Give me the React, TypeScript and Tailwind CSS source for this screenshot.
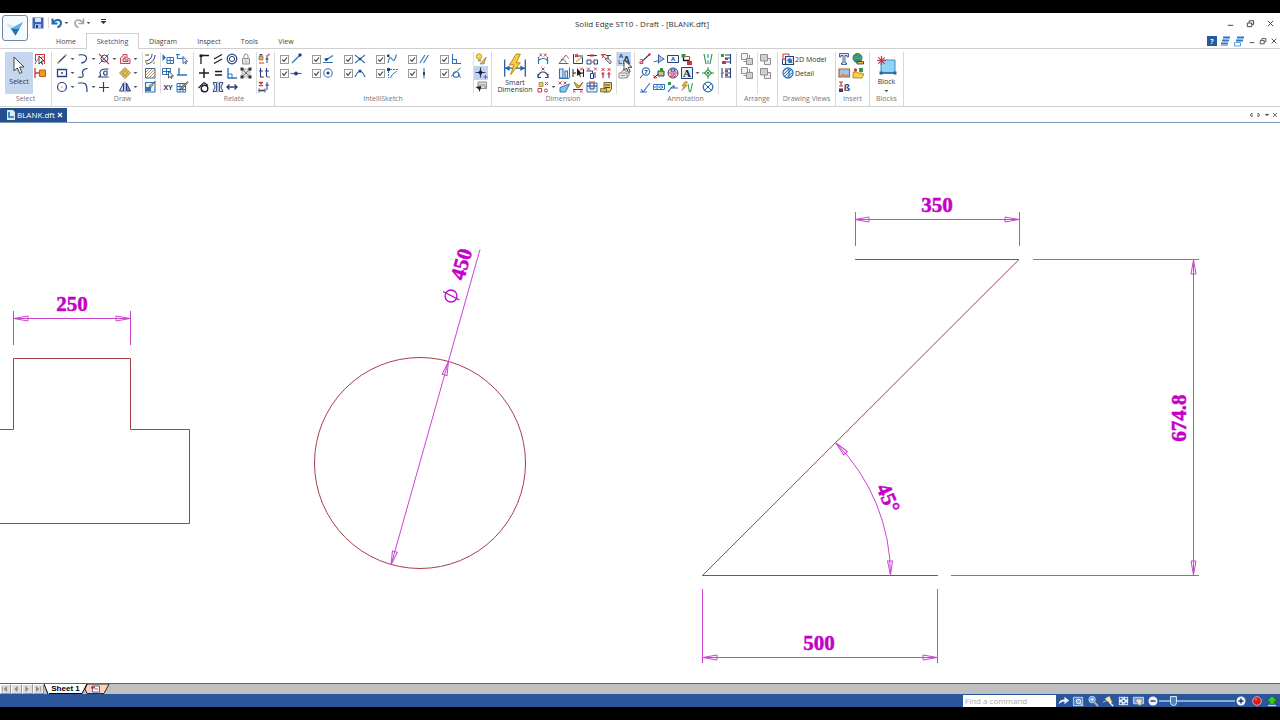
import React from "react";

const N = "#27407f";
const B = "#2f74b8";
const R = "#d2343c";
const Y = "#ecb72c";
const G = "#2f9a3f";
const K = "#1c1c24";
const S = "#8e8e8e";

const P = ({ d, c = "none", f = "none", w = 1, dash }: { d: string; c?: string; f?: string; w?: number; dash?: string }) => (
  <path d={d} stroke={c} fill={f} strokeWidth={w} strokeDasharray={dash} />
);
const C = ({ x = 7, y = 7, r = 4, c = "none", f = "none", w = 1 }: { x?: number; y?: number; r?: number; c?: string; f?: string; w?: number }) => (
  <circle cx={x} cy={y} r={r} stroke={c} fill={f} strokeWidth={w} />
);
const T = ({ x = 7, y = 10, s = 8, f = N, serif = false, children }: { x?: number; y?: number; s?: number; f?: string; serif?: boolean; children: string }) => (
  <text x={x} y={y} fontSize={s} fill={f} textAnchor="middle" className={serif ? "font-['Liberation_Serif',serif] font-bold" : "font-['Open_Sans',sans-serif] font-bold"}>
    {children}
  </text>
);

const art: Record<string, React.ReactNode> = {
  selCurve: <><P d="M2.500 2v7M2 2.500h10M11.500 3v9M2 12c2-5 5-7 9-7" c={R} /><P d="M6 4v8l2-2 1.500 2.500L8.500 9H11z" c={K} f="#fff" w={0.8} /></>,
  selDim: <><P d="M2 2v10M2 7h5" c={R} w={1.3} /><P d="M6.500 4h6v6.500h-6z" c="#b8640c" f="#f39a1d" /></>,
  line: <><P d="M3 11 11 3" c={N} w={1.2} /><C x={3} y={11} r={1.1} f={Y} /><C x={11} y={3} r={1.1} f={Y} /></>,
  arc: <P d="M2.500 3C9 2 11 4 10.500 7S6.500 11 5 11" c={N} w={1.2} />,
  trim: <><C x={7.500} y={6.500} r={3.500} c={N} /><P d="M2 12 12 2" c={N} w={0.8} /><P d="M2 2l10 10" c={R} w={1.1} /></>,
  offset: <P d="M2.500 11.500V6L5 4V2.500h4V6l3 1v4.500zM5 9.500V7l2-1V4.500V8h3v1.500z" c="#b84a58" f="#fbe3e6" />,
  rect: <><P d="M2.500 3.500h9v7h-9z" c={N} w={1.3} /><C r={1} f={N} /></>,
  scurve: <P d="M2 11c4 1 6 0 5-2.500S6 3 11.500 2.500" c={N} w={1.2} />,
  dshape: <P d="M11.500 3H8C3.500 3 2 6 3.500 9.500L2 11h9.500M10 5H8.500c-2.500 0-2.500 4 0 4H10z" c={N} w={1.1} />,
  move: <P d="M7 1.500 9.500 4H8v2h2V4.500L12.500 7 10 9.500V8H8v2h1.500L7 12.500 4.500 10H6V8H4v1.500L1.500 7 4 4.500V6h2V4H4.500z" c="#776019" f="#f5c83a" w={0.6} />,
  circle: <><C r={4.500} c={N} w={1.2} /><C r={0.9} f={Y} /></>,
  fillet: <P d="M2 3h4.500C10 3 11 5 11 12" c={N} w={1.2} />,
  cross: <P d="M6.500 2v10M2 7.500h10" c={N} w={1.2} />,
  mirror: <><P d="M5.500 3v8h-4z" c={N} f="#d9e2f4" /><P d="M8.500 3v8h4z" c={N} f="#7d8ebf" /><P d="M7 1.500v11" c={N} w={0.7} /></>,
  curveB: <><P d="M2 9c4 0 7-3 7-7M3 12c5 0 9-4 9-9M2 3h4" c={N} /><P d="M2 2h2v2H2zM10 10h2v2h-2zM2 9h2v2H2z" f={Y} /></>,
  hatch: <><P d="M2.500 2.500h9.500v9.500H2.500z" c="#4a628c" /><P d="M3 6l3-3M3 9l6-6M3 12l9-9M6 12l6-6M9 12l3-3" c="#c2743a" w={0.8} /></>,
  fill: <><P d="M2.500 2.500h9.500v9.500H2.500z" c={B} w={1.1} f="#e8f3fb" /><P d="M3 7h5v4H3z" f={B} /><P d="M12.500 1 6 6l2 1.500z" f={Y} c={N} w={0.6} /></>,
  arrowGrid: <><P d="M1.500 2v7L5 5.500z" f={B} /><P d="M6 5.500h6.500v6H6zM6 8.500h6.500M9.200 5.500v6" c={B} /></>,
  gridCur: <><P d="M1.500 2.500h8v6h-8zM1.500 5.500h8M5.500 2.500v6" c={B} /><P d="M7.500 5v7l1.800-1.500 1 2L11.200 12l-1-2h2.300z" c={K} f="#fff" w={0.7} /></>,
  xy: <T s={7} y={9.500}>XY</T>,
  relArrow: <><P d="M2.500 2v4.500H8" c={B} w={1.2} /><P d="M1 2.500h4" c={B} /><P d="M8 4.500v7l1.600-1.500 1 2 .9-.4-1-2.100h2z" c={N} f="#fff" w={0.8} /></>,
  ell: <P d="M4 2v7h8M2 9h2" c={B} w={1.4} />,
  gridPen: <><P d="M2 3.500h8.500V12H2zM2 6.500h8.500M2 9.500h8.500M5 3.500V12M8 3.500V12" c={B} /><P d="M12.500 1.500 6 8l-.5 1.500L7 9l6-6.500z" f={Y} c={K} w={0.5} /></>,
  corner: <><P d="M4 12V3.500h8" c={K} w={1.3} /><P d="M2.500 2.500h3v2.500h-3z" f={K} /></>,
  parallel: <P d="M3 7l8-4.500M3 11.500 11 7" c={K} w={1.3} />,
  concentric: <><C r={4.800} c={N} w={1.2} /><C r={2.600} c={N} /></>,
  lock: <><P d="M3.500 6.500h7v5.500h-7z" c={S} f="#e6e6e6" /><P d="M5 6.500V4a2 2 0 014 0v2.500M7 8.500v2" c={S} /></>,
  plus: <P d="M7 2.500v9.500M2 7h10" c={K} w={1.5} />,
  equal: <P d="M4 5.500h7M4 9h7" c={K} w={1.5} />,
  perp: <><P d="M3 2v10h9" c={B} w={1.4} /><P d="M3 8h4v4" c={B} /></>,
  rigid: <><P d="M3 3h8v8H3z" c={S} f="#ddd" w={0.6} /><P d="M1.500 1.500h3v3h-3zM9.500 1.500h3v3h-3zM1.500 9.500h3v3h-3zM9.500 9.500h3v3h-3z" f="#333" /><P d="M4 4l6 6M10 4l-6 6" c="#555" w={0.8} /></>,
  tangent: <><C x={7.500} y={8.500} r={3.300} c={K} w={1.4} /><P d="M1.500 8 7 2.500l4 3" c={K} w={1.2} /><C x={7} y={3} r={1} f={B} /></>,
  symm: <><P d="M2 2.500h3.500v9H2l2-4.500zM12 2.500H8.500v9H12L10 7z" c={N} f="#dfe5f1" w={0.9} /><P d="M7 1.500v11" c={N} w={0.6} /></>,
  coll: <P d="M2 7h10M4.500 4.500 2 7l2.500 2.500M9.500 4.500 12 7 9.500 9.500" c={N} w={1.4} />,
  relA: <><P d="M2 4.500h4V8H2z" f={Y} c="#865" w={0.7} /><P d="M3 4V2.500h2V4M10 3v8M8.500 7h3" c={N} /><P d="M2 11h5M11 2l1.500 1.500" c={R} w={1.2} /></>,
  relB: <><P d="M3.500 2v9h2M2 5h4M9.500 2v9M8 5h4" c={N} w={1.1} /><P d="M5 11h2M10 11h3" c={R} /></>,
  relC: <><P d="M2 2l4 4M6 2 2 6M4 1.500v5" c={R} w={1.1} /><P d="M2 8.500v4M8 8.500v4M2 10.500h6M10 2v8M8.500 5H12" c={N} /><P d="M3.500 9l3 3M6.500 9l-3 3" c={R} w={0.8} /></>,
  isEnd: <><P d="M3 11 11 3" c={B} w={1.2} /><C x={11} y={3} r={1.7} f={N} /></>,
  isMid: <><P d="M1.500 7.500h11" c={B} w={1.2} /><C x={7} y={7.500} r={1.9} f={N} /></>,
  isPt: <><P d="M2 10.500h10M4 8.500l8-5" c={B} w={1.2} /><P d="M3 6.500 8 6 5.500 9.500z" f={N} /></>,
  isCen: <><C r={4.200} c={B} w={1.1} /><C r={1.600} f={N} /></>,
  isX: <><P d="M2 3l10 8M2 11l10-8" c={B} w={1.1} /><C r={1.3} f={N} /></>,
  isArc: <><P d="M2 11C3.500 8 4 5.500 7 5.500S10.500 8 12 11" c={B} w={1.2} /><C x={7} y={5} r={1.600} f={N} /></>,
  isCurve: <><P d="M3 11c1-5 2-7 4-4s3 1 4.500-4.500" c={B} w={1.1} /><P d="M2 2.500h2.500V5H2z" f={N} /></>,
  isEdge: <><P d="M3.500 5v7M5 3.500h8" c={B} dash="2 1" /><P d="M5.500 12c1-3 3-5 6-6.500" c={B} /><P d="M2 2h3v3H2z" f={N} /></>,
  isPar: <P d="M3 11l5-8M6.500 11l5-8" c={B} w={1.1} />,
  isVert: <><P d="M7 2v10.500" c={B} w={1.1} /><P d="M6 6h2v3H6z" f={N} /></>,
  isPerp: <P d="M3.500 2v9.500H12M3.500 7.500h4v4" c={B} w={1.1} />,
  isTan: <><C x={7} y={8.500} r={2.8} c={B} w={1.1} /><P d="M2 10.500 11.500 2M9.500 7l2 5" c={B} /></>,
  bulb: <><C x={5} y={4.500} r={2.8} f="#f6dc4a" c="#a68518" w={0.7} /><P d="M4 7.500h3v2H4z" f="#999" /><P d="M6 12 12 5l-2 7z" f={Y} c="#865" w={0.6} /></>,
  plusArrow: <><P d="M6.500 1.500v10M1.500 6.500h10" c={N} w={1.2} /><P d="M6.500 4 9 6.500 6.500 9 4 6.500z" f={K} /><P d="M11.500 9v4M9.500 11h4" c="#a13ab5" /></>,
  screenCur: <><P d="M4 2h8.500v6.500H4z" c={S} f="#ddd" /><P d="M5 5h6v3" c={S} /><P d="M1.500 7 7.500 6 5.500 12 4.500 9z" f={K} /></>,
  dBetween: <><P d="M2.500 5v7M11.500 5v7M3 8c2-2 6-2 8 0" c={B} w={1.2} /><P d="M3.500 1.500l2.500 3M6 1.500l-2.500 3M8 1.500l2.500 3M10.500 1.500 8 4.500" c={R} w={0.9} /></>,
  dAngle: <><P d="M2 11c1-5 4-5 5-5s4 0 5 5M2 8v3.500h3M12 8v3.500H9" c={N} w={1.1} /><P d="M5.500 1.500l3 3M8.500 1.500l-3 3" c={R} /></>,
  dCoord: <><P d="M2 8.500h3.500V12H2z" c={R} /><P d="M3 2.500h4v4H3z" f="#dccf79" c="#8a7b31" w={0.7} /><C x={10} y={10.500} r={1.5} c={R} /><P d="M9 2l3 3M12 2 9 5" c={R} /></>,
  dAng2: <><P d="M2 11.500 9 3M2 11.500h9.500" c={R} /><P d="M4 7.500c3 0 5 1 5 3" c={B} /><P d="M9 3l3 4" c={S} /></>,
  dSym: <><P d="M2.500 2v9.500h9V5M5 4h7" c={N} /><P d="M4 2.500 7 5M7 2 4 5" c={R} w={1.1} /><P d="M11 5 5 10" c={Y} w={1.5} /></>,
  dChain: <><P d="M2 3.500h10M2 8h4v4H2zM9 8h3.500v4H9z" c={N} /><P d="M5.500 2l3 3M8.500 2l-3 3M7 10h2" c={R} /></>,
  dErase: <><P d="M2 2.500h5M2 2.500l5 4M3 6l3-4" c={R} /><P d="M7 3.500h5M9 3v5" c={N} /><P d="M6 7l5 5 1.500-2L9 6z" f="#d9cfd9" c={K} w={0.6} /></>,
  dStep: <P d="M2.500 3v9h3.500V3zM8 12V5h2.500v7zM2 12.500h10M12.500 1.500V12" c={B} w={1.1} f="#dcebf7" />,
  dCursor: <><P d="M2 3v8M2 7h3M12.500 3v8M10 7h2" c={K} /><P d="M6 2v8l2-1.500 1 2.500 1-.5-1-2.500h2z" f={K} /><P d="M9 1.500l3 3M12 1.500l-3 3" c={R} /></>,
  dGroup: <><P d="M1.500 5h6v3M5.500 7.500h3v5h-3zM10 6v6" c={N} /><P d="M2 1.500l3 3M5 1.500l-3 3M9 1.500l3 3M12 1.500l-3 3" c={R} w={0.9} /></>,
  dDouble: <><P d="M2.500 2l3 3M5.500 2l-3 3M8.500 2l3 3M11.500 2l-3 3" c={R} /><P d="M4 6v6M10 6v6M2.500 8h3M8.500 8h3" c="#b52a45" w={1.2} /></>,
  dFill: <><P d="M1.500 1.500l3 3M4.500 1.500l-3 3M6.500 1.500l3 3M9.500 1.500l-3 3" c={R} w={0.9} /><P d="M3 12V7.500L12.500 4l-4 8z" f="#8ac3e8" c={B} /></>,
  dBrush: <><P d="M2 9.500h10" c={N} /><P d="M3 2l3 6 3-1 3-5-4 4z" f={Y} c="#7a5517" w={0.7} /><P d="M2 10.500l2.500 2M4.500 10.500l-2.500 2M9 10.500l2.500 2M11.500 10.500l-2.500 2" c={R} w={0.8} /></>,
  dFrame: <><P d="M2 3h10v9H2z" c={B} f="#eaf4fb" /><P d="M2 6h10M5 3v6h4V3" c={N} /><P d="M4 2h6" c={R} /></>,
  dSheet: <><P d="M5 2.500h7.500V9l-2 3H5z" f="#e9d67a" c="#776324" /><P d="M6 5h5M6 7.500h5" c={N} /><P d="M1.500 8.500h6v3.500h-6z" f={Y} c={K} w={0.5} /></>,
  styleA: <><T x={4} y={6} s={6}>A</T><T x={9.500} y={12} s={10}>A</T><P d="M2 8v3.500h3" c={B} /></>,
  styleGrey: <><P d="M2 7h8v5H2zM4 7l3-4h5v6l-2 3" c={S} f="#eee" /><P d="M4 9.500h4M8 5h3" c={S} /></>,
  leader: <><P d="M5 8.500 12 2" c={N} w={1.1} /><C x={11.500} y={2.500} r={1.2} f={R} /><T x={3.500} y={12} s={8} f={R}>a</T></>,
  edgeCond: <><P d="M1.500 10 12.500 7M6.500 2.500v9" c={B} /><P d="M6.500 3v7.500l5.500-3.500z" f="#a6c7e5" c={N} w={0.7} /></>,
  charBox: <><P d="M1.500 3.500h11v7h-11z" c={N} /><T s={6} y={9.200}>A</T></>,
  connector: <><P d="M3.500 3.500v5h5v3" c={K} w={1.3} /><P d="M1.500 2h4v3.500h-4z" f={G} /><P d="M7 9h5v4H7z" f={R} /><P d="M5.500 4.500h4v5" c={R} /></>,
  balloon: <><C x={8} y={5.500} r={3.700} c={B} w={1.2} /><P d="M5 8.500 2 12" c={N} /><T x={8} y={7.800} s={6}>7</T></>,
  callout: <><P d="M6 5h6v5H6z" c={N} f="#d9bd76" /><P d="M2 12l4-4" c={K} /><P d="M2 12V9M2 12h3" c={R} /><P d="M8 2h3v4H8z" f={G} /></>,
  datum: <><C r={5} c={N} f="#eef" /><P d="M2 7h10" c={R} /><T s={5} y={6}>xx</T><T s={5} y={10.500} f={R}>ab</T></>,
  textA: <><P d="M1.500 1.500h11v11h-11z" c={N} f="#e5edf7" /><T y={11} s={11} f={K} serif>A</T></>,
  surface: <P d="M2 12h7M3 9l2 3 7-9" c={B} w={1.1} />,
  frame: <P d="M1.500 4.500h11v5h-11zM5 4.500v5M9 4.500v5M3 6v2M7 6v2M10.500 6v2" c={B} />,
  weld: <><P d="M2 12 5 8h7" c={B} w={1.2} /><P d="M2 2h3v3H2z" f={G} /><P d="M5 8l3-2.500v2.500" c={N} /></>,
  auto: <><P d="M8 4l1.500 8M12.500 3l-2 9" c={G} /><P d="M5 1.500 2 6h2L2 10.500 7 5.500H5L7.500 2z" f={Y} c="#9a6d10" w={0.6} /></>,
  centerline: <><P d="M3 2l2 10M11 2 9 12" c={G} w={1.2} /><P d="M7 2v4M7 8v4" c={B} /></>,
  centermark: <><P d="M7 1v12M1 7h12" c={G} /><P d="M7 3.500 10.500 7 7 10.500 3.500 7z" c={G} f="#d7efe3" w={1.1} /><C r={1} f={N} /></>,
  bolt: <><C r={4.800} c={B} w={1.3} /><P d="M3.500 3.500l7 7M10.500 3.500l-7 7" c={B} /><C r={1} f={N} /></>,
  table1: <><P d="M6 3h6M6 6h6M6 10h6M11.500 2v10" c={N} w={1.1} /><P d="M2 2h3v3H2z" f={G} /><P d="M6 6h3v2H6zM3 9h4v3H3z" f="#ad3d67" /></>,
  table2: <><P d="M3 2v10M6 3h6M6 7h6M6 11h6M11.500 2v10" c={N} w={1.1} /><P d="M6 4h3v2H6zM6 8h3v2H6z" f="#ad3d67" /><P d="M2 7h3" c={G} /></>,
  arr1: <><P d="M1.500 1.500h6v6h-6z" c={S} f="#f4f4f4" /><P d="M6.500 6.500h6v6h-6z" c={S} f="#cfcfcf" /><P d="M9.500 3v3M3.500 9.500h3" c={S} /></>,
  arr2: <><P d="M6.500 6.500h6v6h-6z" c={S} f="#ececec" /><P d="M2.500 2.500h7v6.500h-7z" c={S} f="#cfcfcf" /></>,
  model: <><P d="M2 2h6v5H2z" c={R} f="#fff" /><P d="M4.500 4.500h8v8h-8z" c={N} f="#e4eefa" w={1.1} /><P d="M6 8l3-2 2 2v3H8z" f={B} /><P d="M1.500 7v5.500h3" c={N} /></>,
  detail: <><C r={5} c={B} w={1.3} f="#e0effa" /><P d="M4 10l6-6M3 8l5-5M6.500 11 11 6.500" c={B} /><P d="M8 3v8" c={N} w={0.8} /></>,
  bigT: <P d="M2.500 1.500h9v3.500H10V3.500H8V11h1.500v1.500h-5V11H6V3.500H4V5H2.500z" c={N} f="#d7e6f6" w={0.8} />,
  globe: <><C x={6.500} y={6} r={4.500} f="#48a552" c="#2f6f96" /><P d="M3 4c3-2 4 1 7 0M3 8h6" c="#337ac0" w={1.3} /><P d="M6 9.500h6.500v2.500H6z" f={Y} c={K} w={0.7} /></>,
  image: <><P d="M2 3h10.500v8H2z" c="#b45a34" f="#9cc8e8" w={1.2} /><P d="M3 10l3-3 2 2 2-1 2 2z" f="#e08a3a" /></>,
  folder: <><P d="M2 12V6h4l1 1h4v1h2l-2 4z" f="#f5d24c" c="#a17d14" w={0.8} /><P d="M8 2h4v4H8z" f={G} /><C x={4.500} y={4} r={1.700} f={R} /></>,
  beta: <><P d="M2 2h4M4 2v4M2 6h4" c={R} w={1.2} /><P d="M2 8.500h4v3.500H2z" f={N} /><T x={10} y={11} s={9}>ß</T></>,
};

const Icon = ({ name }: { name: string }) => (
  <svg viewBox="0 0 14 14" className="size-3.5 shrink-0" fill="none" aria-hidden="true">{art[name]}</svg>
);
const Caret = () => (
  <svg viewBox="0 0 7 14" className="h-3.5 w-[7px] shrink-0" aria-hidden="true"><path d="M1.500 6h4L3.500 8z" fill="#555" /></svg>
);
const Tool = ({ name, on = false }: { name: string; on?: boolean }) => {
  const caret = name.endsWith("+");
  const key = caret ? name.slice(0, -1) : name;
  return (
    <button type="button" aria-label={key} className={on ? "flex h-3.5 items-center bg-[#c3d3ee]" : "flex h-3.5 items-center hover:bg-[#dfe8f6]"}>
      <Icon name={key} />
      {caret && <Caret />}
    </button>
  );
};
const Column = ({ names, wide = false, sep = false, active = "" }: { names: string[]; wide?: boolean; sep?: boolean; active?: string }) => (
  <div className={`flex shrink-0 flex-col items-start ${wide ? "w-[21px]" : ""} ${sep ? "ml-[3px] border-l border-[#dedede]" : ""}`}>
    {names.map((n, i) => <Tool key={i} name={n} on={n === active} />)}
  </div>
);
const Group = ({ label, width, children }: { label: string; width: string; children: React.ReactNode }) => (
  <section aria-label={label} className={`flex shrink-0 flex-col border-r border-[#d8d8d8] ${width}`}>
    <div className="flex h-[42px]">{children}</div>
    <h2 className="text-center leading-[9px] whitespace-nowrap text-[#777]">{label}</h2>
  </section>
);

const checks: [string, string, string, string][] = [
  ["isEnd", "Endpoint", "isMid", "Midpoint"],
  ["isPt", "Point on", "isCen", "Center"],
  ["isX", "Intersection", "isArc", "Silhouette"],
  ["isCurve", "Edit point", "isEdge", "Extension"],
  ["isPar", "Parallel", "isVert", "Vertical"],
  ["isPerp", "Perpendicular", "isTan", "Tangent"],
];
const Check = ({ icon, label }: { icon: string; label: string }) => (
  <label className="flex h-3.5 w-8 items-center">
    <span className="grid">
      <input type="checkbox" defaultChecked aria-label={label} className="peer col-start-1 row-start-1 size-[9px] appearance-none border border-[#9a9a9a] bg-white" />
      <svg viewBox="0 0 9 9" className="invisible col-start-1 row-start-1 size-[9px] peer-checked:visible" fill="none"><path d="M2.300 4.500 4 6.300l3-3.800" stroke="#444" strokeWidth="1.200" /></svg>
    </span>
    <Icon name={icon} />
  </label>
);

const WinIcon = ({ d, label, small = false }: { d: string; label: string; small?: boolean }) => (
  <button type="button" aria-label={label} className={small ? "w-[11px]" : "w-5"}>
    <svg viewBox="0 0 10 10" className={small ? "mx-auto size-2" : "mx-auto size-[9px]"} fill="none"><path d={d} stroke="#444" strokeWidth={1.1} /></svg>
  </button>
);
const MIN = "M2 7h6";
const RES = "M1.500 4.500h5v4h-5zM3.500 4V2h5v4h-2";
const CLOSE = "M2 2l6 6M8 2 2 8";

const Header = () => (
  <header className="flex border-b border-[#cfcfcf]">
    <button type="button" aria-label="Application menu" className="mt-[2px] ml-[2px] flex size-[26px] shrink-0 items-center justify-center rounded-[3px] border border-[#6f86a8] bg-[#f7fafd]">
      <svg viewBox="0 0 20 20" className="size-5" aria-hidden="true">
        <path d="M2 6l8 2.500L18 4l-7.500 13.500z" fill="#8bc3ee" />
        <path d="M2 6l8 2.500.5 9z" fill="#d3eafb" />
        <path d="M6 10.500 18 4l-7.500 13.500z" fill="#5fb0ea" />
        <path d="M6 10.500l6 .5 2.500-.5-4 7z" fill="#1d6fc0" />
      </svg>
    </button>
    <div className="flex min-w-0 flex-1 flex-col">
      <div className="flex h-5 items-center">
        <div className="flex flex-1 items-center pl-1">
          <button type="button" aria-label="Save" className="mr-[2px] border-r border-[#ddd] pr-[4px]">
            <svg viewBox="0 0 12 12" className="size-3"><path d="M.5.500h11v11H.500z" fill="#3f62b5" /><path d="M3 1h6v4H3z" fill="#dbe7fa" /><path d="M3 7h6v4H3z" fill="#a9bde6" /><path d="M4 8h2v3H4z" fill="#27407f" /></svg>
          </button>
          <button type="button" aria-label="Undo" className="flex items-center">
            <svg viewBox="0 0 12 12" className="size-3" fill="none"><path d="M1.500 1.500v5h5" stroke="#2469ad" strokeWidth="2" /><path d="M2 6c2-4 8-4 8 0 0 2-1 3.500-3.500 4.500" stroke="#2469ad" strokeWidth="2" /></svg><Caret />
          </button>
          <button type="button" aria-label="Redo" className="ml-[3px] flex items-center">
            <svg viewBox="0 0 12 12" className="size-3" fill="none"><path d="M10.500 1.500v5h-5" stroke="#a5a5a5" strokeWidth="1.600" /><path d="M10 6c-2-4-8-4-8 0 0 2 1 3.500 3.500 4.500" stroke="#a5a5a5" strokeWidth="1.600" /></svg><Caret />
          </button>
          <button type="button" aria-label="Customize" className="mb-1 ml-2">
            <svg viewBox="0 0 7 7" className="size-[7px]"><path d="M1 1h5v1H1zM.5 3h6l-3 3z" fill="#333" /></svg>
          </button>
        </div>
        <h1 className="mr-7 text-[8px] text-[#333]">Solid Edge ST10 - Draft - [BLANK.dft]</h1>
        <div className="flex flex-1 justify-end">
          <WinIcon d={MIN} label="Minimize" /><WinIcon d={RES} label="Restore" /><WinIcon d={CLOSE} label="Close" />
        </div>
      </div>
      <div className="-mb-px flex h-4 items-stretch">
        <nav className="ml-[18px] flex items-stretch text-[#444]">
          <a href="#home" className="flex w-10 items-center justify-center">Home</a>
          <a href="#sketching" className="flex w-[53px] items-center justify-center border border-b-0 border-[#d0d0d0] bg-white text-[#27509b]">Sketching</a>
          <a href="#diagram" className="flex w-12 items-center justify-center">Diagram</a>
          <a href="#inspect" className="flex w-11 items-center justify-center">Inspect</a>
          <a href="#tools" className="flex w-[37px] items-center justify-center">Tools</a>
          <a href="#view" className="flex w-9 items-center justify-center">View</a>
        </nav>
        <div className="ml-auto flex items-center pr-px">
          <button type="button" aria-label="Help" className="mr-px flex size-[10px] items-center justify-center bg-[#245a9e] font-bold text-white">?</button>
          <button type="button" aria-label="Arrange windows" className="w-3.5">
            <svg viewBox="0 0 12 12" className="mx-auto size-3" fill="none"><path d="M4 2.500h7M3 5.500h7M2 8.500h7" stroke="#2f74c8" strokeWidth="1.800" /><path d="M1.500 10.500h7" stroke="#8db9e8" /></svg>
          </button>
          <button type="button" aria-label="Switch windows" className="w-3.5">
            <svg viewBox="0 0 12 12" className="mx-auto size-3" fill="none"><path d="M4 2.500h7M3 5.500h7" stroke="#2f74c8" strokeWidth="1.800" /><path d="M1.500 7.500h6v3.500h-6z" fill="#fff" stroke="#5a9adf" /></svg>
          </button>
          <WinIcon small d={MIN} label="Minimize document" /><WinIcon small d={RES} label="Restore document" /><WinIcon small d={CLOSE} label="Close document" />
        </div>
      </div>
    </div>
  </header>
);

const Ribbon = () => (
  <div className="flex h-[58px] overflow-hidden border-b border-[#cfcfcf] pt-[3px]">
    <Group label="Select" width="w-[52px]">
      <button type="button" className="ml-[5px] flex h-[42px] w-7 shrink-0 flex-col items-center gap-px bg-[#c5d6ef] pt-1 text-[#333]">
        <svg viewBox="0 0 14 20" className="h-5 w-3.5"><path d="M2 1v14l3.300-3 2.400 5.500 2.300-1L7.600 11H12z" fill="#fff" stroke="#444" /></svg>
        Select
      </button>
      <Column names={["selCurve", "selDim"]} />
    </Group>
    <Group label="Draw" width="w-[142px]">
      <div className="w-[3px] shrink-0" />
      <Column wide names={["line+", "rect+", "circle+"]} />
      <Column wide names={["arc+", "scurve", "fillet+"]} />
      <Column wide names={["trim+", "dshape", "cross"]} />
      <Column wide names={["offset+", "move+", "mirror+"]} />
      <Column sep names={["curveB", "hatch", "fill"]} />
      <Column sep names={["arrowGrid", "gridCur", "xy"]} />
      <Column names={["relArrow", "ell", "gridPen"]} />
    </Group>
    <Group label="Relate" width="w-[81px]">
      <div className="w-[3px] shrink-0" />
      <Column names={["corner", "plus", "tangent"]} />
      <Column names={["parallel", "equal", "symm"]} />
      <Column names={["concentric", "perp", "coll"]} />
      <Column names={["lock", "rigid"]} />
      <Column sep names={["relA", "relB", "relC"]} />
    </Group>
    <Group label="IntelliSketch" width="w-[217px]">
      <div className="ml-[5px] flex w-[190px] shrink-0">
        {checks.map(([a, al, b, bl]) => (
          <div key={a} className="w-8 shrink-0"><Check icon={a} label={al} /><Check icon={b} label={bl} /></div>
        ))}
      </div>
      <Column sep active="plusArrow" names={["bulb", "plusArrow", "screenCur"]} />
    </Group>
    <Group label="Dimension" width="w-[143px]">
      <button type="button" className="ml-[2px] flex w-[42px] shrink-0 flex-col items-center pt-px leading-[7px] text-[#333]">
        <svg viewBox="0 0 24 24" className="size-[26px] shrink-0" fill="none"><path d="M2.500 6v16M21.500 6v16M3 14h18" stroke="#2b5f9e" strokeWidth="1.200" /><path d="M3 14l4-2.500v5zM21 14l-4-2.500v5z" fill="#2b5f9e" /><path d="M13 1 7 11h4l-3 9 9-11h-4l4-8z" fill="#f8cf3c" stroke="#a8770f" strokeWidth=".8" /></svg>
        <span>Smart<br />Dimension</span>
      </button>
      <Column wide names={["dBetween", "dAngle", "dCoord+"]} />
      <Column names={["dAng2", "dStep", "dFill"]} />
      <Column names={["dSym", "dCursor", "dBrush"]} />
      <Column names={["dChain", "dGroup", "dFrame"]} />
      <Column names={["dErase", "dDouble", "dSheet"]} />
      <div className="relative flex">
        <Column sep active="styleA" names={["styleA", "styleGrey"]} />
        <svg viewBox="0 0 10 15" className="absolute top-[7px] left-[10px] h-[15px] w-[10px]" aria-hidden="true"><path d="M1 1v10.500L3.500 9l2 4.500 1.700-.8-2-4.400H9z" fill="#fff" stroke="#333" strokeWidth=".9" /></svg>
      </div>
    </Group>
    <Group label="Annotation" width="w-[102px]">
      <div className="w-[3px] shrink-0" />
      <Column names={["leader", "balloon", "surface"]} />
      <Column names={["edgeCond", "callout", "frame"]} />
      <Column names={["charBox", "datum", "weld"]} />
      <Column wide names={["connector", "textA+", "auto"]} />
      <Column names={["centerline", "centermark", "bolt"]} />
      <Column sep names={["table1", "table2"]} />
    </Group>
    <Group label="Arrange" width="w-[41px]">
      <div className="w-[3px] shrink-0" />
      <Column names={["arr1", "arr1"]} />
      <Column sep names={["arr2", "arr2"]} />
    </Group>
    <Group label="Drawing Views" width="w-[58px]">
      <div className="flex flex-col pl-[3px] text-[#333]">
        <button type="button" className="flex h-3.5 items-center whitespace-nowrap"><Icon name="model" />2D Model</button>
        <button type="button" className="flex h-3.5 items-center whitespace-nowrap"><Icon name="detail" />Detail</button>
      </div>
    </Group>
    <Group label="Insert" width="w-[34px]">
      <div className="w-px shrink-0" />
      <Column names={["bigT", "image", "beta"]} />
      <Column names={["globe", "folder"]} />
    </Group>
    <Group label="Blocks" width="w-[34px]">
      <button type="button" className="flex w-full flex-col items-center leading-[9px] text-[#333]">
        <svg viewBox="0 0 22 22" className="mt-[3px] size-[22px] shrink-0" fill="none"><path d="M5 5h14v13H5z" fill="#8fd3f5" stroke="#3a8fc0" /><path d="M5 18h14" stroke="#1b6ea8" strokeWidth="1.500" /><path d="M3.500 16.500h3v3h-3zM17.500 16.500h3v3h-3z" fill="#28659c" /><path d="M5.500 1v9M1 5.500h9M2.300 2.300l6.400 6.400M8.700 2.300 2.300 8.700" stroke={R} strokeWidth="1.200" /></svg>
        Block
        <svg viewBox="0 0 7 4" className="mt-[3px] h-1 w-[7px]"><path d="M1.500 1h4l-2 2z" fill="#444" /></svg>
      </button>
    </Group>
  </div>
);

const DocTabs = () => (
  <div className="flex h-4 items-stretch border-b border-[#7f99ba] pt-px">
    <div className="flex w-[67px] items-center bg-[#24508f] pl-1.5 text-white">
      <svg viewBox="0 0 10 10" className="mr-px size-[10px]"><path d="M1 0h6l2 2v8H1z" fill="#d6ebf8" /><path d="M3 2v5h5" stroke="#1f6e9e" strokeWidth="1.500" fill="none" /></svg>
      <a href="#blank" className="text-[8px] leading-[8px]">BLANK.dft</a>
      <button type="button" aria-label="Close BLANK.dft" className="ml-auto mr-1">
        <svg viewBox="0 0 6 6" className="size-1.5"><path d="M1 1l4 4M5 1 1 5" stroke="#fff" strokeWidth="1.200" /></svg>
      </button>
    </div>
    <div className="ml-auto flex items-center gap-[2px] pr-[2px]">
      {[["Previous", "M4 1 2 3l2 2z"], ["Next", "M2 1l2 2-2 2z"], ["List", "M1 2h4L3 4z"], ["Close", "M1 1l4 4M5 1 1 5"]].map(([l, d]) => (
        <button key={l} type="button" aria-label={l}><svg viewBox="0 0 6 6" className="size-1.5" fill="none"><path d={d} stroke="#555" strokeWidth={l === "List" ? 0.3 : 0.8} fill={l === "List" ? "#555" : "none"} /></svg></button>
      ))}
    </div>
  </div>
);

const Arrow = ({ x, y, a }: { x: number; y: number; a: number }) => (
  <path d="M0 0 14-2.500V2.500z" transform={`translate(${x} ${y}) rotate(${a})`} />
);
const Drawing = () => (
  <main className="flex min-h-0 flex-1 bg-white">
    <svg viewBox="0 123 1280 560" preserveAspectRatio="xMinYMin meet" className="h-full w-full" role="img" aria-label="Draft sheet">
      <g fill="none" stroke="#a83f49" strokeWidth="1">
        <path d="M0 429.500h13.500v-71h117v71h59v94H0M855 259.500h164L702.500 575.500H938" />
        <circle cx="420" cy="463" r="105.500" />
      </g>
      <g fill="none" stroke="#cb45d2" strokeWidth="1">
        <path d="M13.500 311v34M130.500 311v34M14 318.500h116" />
        <path d="M480 249.500 391 565" />
        <path d="M855.500 212v34M1019.500 212v34M855 219.500h164" />
        <path d="M1033 259.500h166M951 575.500h248M1193.500 260v315" />
        <path d="M702.500 589v74M937.500 589v74M703 657.500h234" />
        <path d="M835.500 442.500A188 188 0 0 1 890.500 575.500" />
        <Arrow x={14} y={318.500} a={0} /><Arrow x={130} y={318.500} a={180} />
        <Arrow x={448.500} y={361.500} a={106} /><Arrow x={391} y={565} a={-74} />
        <Arrow x={855} y={219.500} a={0} /><Arrow x={1019} y={219.500} a={180} />
        <Arrow x={1193.500} y={260} a={90} /><Arrow x={1193.500} y={575} a={-90} />
        <Arrow x={703} y={657.500} a={0} /><Arrow x={937} y={657.500} a={180} />
        <Arrow x={836} y={443} a={47} /><Arrow x={890.500} y={575} a={-92} />
      </g>
      <g fill="#c400c8" stroke="#c400c8" strokeWidth="0.500" textAnchor="middle" className="font-['Liberation_Serif',serif] text-[21px] font-bold">
        <text x="72" y="311">250</text>
        <text x="937" y="212">350</text>
        <text x="819" y="650">500</text>
        <text transform="translate(1186 418) rotate(-90)">674.8</text>
        <text transform="translate(468 266) rotate(-74)">450</text>
        <text transform="translate(882 501) rotate(66)">45°</text>
        <g fill="none" strokeWidth="1.300"><circle cx="451" cy="296" r="6" /><path d="M443 291.500l16.500 8.500" /></g>
      </g>
    </svg>
  </main>
);

const navs: [string, string][] = [
  ["First sheet", "M2 2v6M7 2 4 5l3 3z"],
  ["Previous sheet", "M6.500 2l-3 3 3 3z"],
  ["Next sheet", "M3.500 2l3 3-3 3z"],
  ["Last sheet", "M8 2v6M3 2l3 3-3 3z"],
];
const SheetBar = () => (
  <div className="flex h-[11px] items-stretch border-t border-[#666] bg-[#c0c0c0]">
    {navs.map(([l, d]) => (
      <button key={l} type="button" aria-label={l} className="w-[11px] border border-[#999] border-t-white border-l-white bg-[#e0e0e0]">
        <svg viewBox="0 0 10 10" className="size-2"><path d={d} fill="#888" stroke="#888" /></svg>
      </button>
    ))}
    <svg viewBox="0 0 5 10" className="h-full w-[5px]"><path d="M0 0h5v10H4z" fill="#fff" /><path d="M0 0l4 10" stroke="#000" /></svg>
    <button type="button" className="w-[33px] border-b border-black bg-white text-center font-['Liberation_Sans',sans-serif] text-[8px] leading-[9px] font-bold whitespace-nowrap text-black">Sheet 1</button>
    <button type="button" aria-label="New sheet" className="w-7">
      <svg viewBox="0 0 28 10" className="h-[10px] w-7"><path d="M0 0h5L0 10z" fill="#fff" /><path d="M5 0h22l-5 9.500H5L3 5z" fill="#f8d5b8" stroke="#000" strokeWidth=".8" /><path d="M0 9.500 5 0" stroke="#000" /><path d="M10.500 2h7v6h-7z" fill="#fff" stroke="#5560c0" /><path d="M9.500 2l3 3M12.500 2l-3 3M9 3.500h4M13 5h3" stroke="#d23040" /></svg>
    </button>
  </div>
);

const statusTools: [string, React.ReactNode][] = [
  ["Go", <path d="M2 10c0-4 3-5 6-5V2l5 4-5 4V7C5 7 4 8 2 10z" fill="#e8f3ff" />],
  ["Zoom area", <g><path d="M1.500 2.500h10v9h-10z" stroke="#bcdcf8" fill="#4d84c5" /><circle cx="7" cy="7" r="2.500" stroke="#fff" fill="#7cb3e8" /><path d="M9 9l3 3" stroke="#f0b882" strokeWidth="1.500" /></g>],
  ["Zoom", <g><circle cx="5.500" cy="5" r="3.500" stroke="#bfe0ff" fill="#5e9ad8" /><path d="M3.500 5h4M5.500 3v4" stroke="#fff" /><path d="M8 8l4 4" stroke="#e5a98a" strokeWidth="2" /></g>],
  ["Look at", <g><path d="M3 4l5-3 3 7-2 1-3-2z" fill="#f8ecb2" stroke="#998540" strokeWidth=".6" /><path d="M8 8l4 4" stroke="#fff" strokeWidth="1.500" /><path d="M1 8l4-2" stroke="#a5ceef" /></g>],
  ["Fit", <g><path d="M2 2h10v9H2z" fill="#e8f1fa" /><path d="M3 3h2v2H3zM9 3h2v2H9zM3 8h2v2H3zM9 8h2v2H9zM6 5.500h2v2H6zM6 3h1v1H6zM7 9h1v1H7z" fill="#27509b" /></g>],
  ["Pan", <g><path d="M1.500 2.500h11v7h-11z" fill="#6fa3d8" stroke="#c8e0f5" /><path d="M4 6c2-3 6-2 7 0l-1 5H7z" fill="#f5dcc0" stroke="#765" strokeWidth=".6" /></g>],
];
const StatusBar = () => (
  <footer className="flex h-[13px] items-center justify-end bg-[#2b579a]">
    <input type="text" aria-label="Find a command" placeholder="Find a command" className="h-3 w-[93px] bg-white px-[2px] text-[8px] outline-none placeholder:text-[#aaa]" />
    <div className="flex items-center">
      {statusTools.map(([l, g]) => (
        <button key={l} type="button" aria-label={l} className="flex w-[15px] justify-center"><svg viewBox="0 0 14 13" className="h-3 w-[13px]" fill="none">{g}</svg></button>
      ))}
    </div>
    <button type="button" aria-label="Zoom out" className="flex w-[13px] justify-center"><svg viewBox="0 0 10 10" className="size-[10px]"><circle cx="5" cy="5" r="4.500" fill="#f2f7fd" /><path d="M2.500 5h5" stroke="#17305c" strokeWidth="1.400" /></svg></button>
    <input type="range" aria-label="Zoom level" min={0} max={100} defaultValue={16} className="h-3 w-[76px] appearance-none bg-transparent [&::-webkit-slider-runnable-track]:h-[2px] [&::-webkit-slider-runnable-track]:bg-[#7db0e8] [&::-webkit-slider-thumb]:-mt-[4px] [&::-webkit-slider-thumb]:h-[10px] [&::-webkit-slider-thumb]:w-[7px] [&::-webkit-slider-thumb]:appearance-none [&::-webkit-slider-thumb]:rounded-b-full [&::-webkit-slider-thumb]:border [&::-webkit-slider-thumb]:border-[#d5e8fb] [&::-webkit-slider-thumb]:bg-[#4c83c4]" />
    <button type="button" aria-label="Zoom in" className="flex w-3 justify-center"><svg viewBox="0 0 10 10" className="size-[10px]"><circle cx="5" cy="5" r="4.500" fill="#f2f7fd" /><path d="M2.500 5h5M5 2.500v5" stroke="#17305c" strokeWidth="1.400" /></svg></button>
    <button type="button" aria-label="Record" className="ml-[3px] flex w-3.5 justify-center"><svg viewBox="0 0 10 10" className="size-[10px]"><circle cx="5" cy="5" r="4.300" fill="#dc1420" stroke="#f0c9c9" strokeWidth=".8" /><circle cx="4" cy="3.500" r="1.300" fill="#f15a5a" /></svg></button>
    <button type="button" aria-label="Upload" className="flex w-4 justify-center"><svg viewBox="0 0 12 12" className="size-3"><path d="M6 1l5 5H8.500v3h-5V6H1z" fill="#3cc91e" stroke="#157a12" strokeWidth=".7" /><path d="M2 10.500h8" stroke="#c7d7ef" strokeWidth="1.300" /></svg></button>
  </footer>
);

export default function App() {
  return (
    <div className="flex h-screen flex-col overflow-hidden bg-black py-[13px] font-['Open_Sans','Noto_Sans',sans-serif] text-[7px] leading-[9px]">
      <div className="flex min-h-0 flex-1 flex-col bg-white">
        <Header />
        <Ribbon />
        <DocTabs />
        <Drawing />
        <SheetBar />
        <StatusBar />
      </div>
    </div>
  );
}
